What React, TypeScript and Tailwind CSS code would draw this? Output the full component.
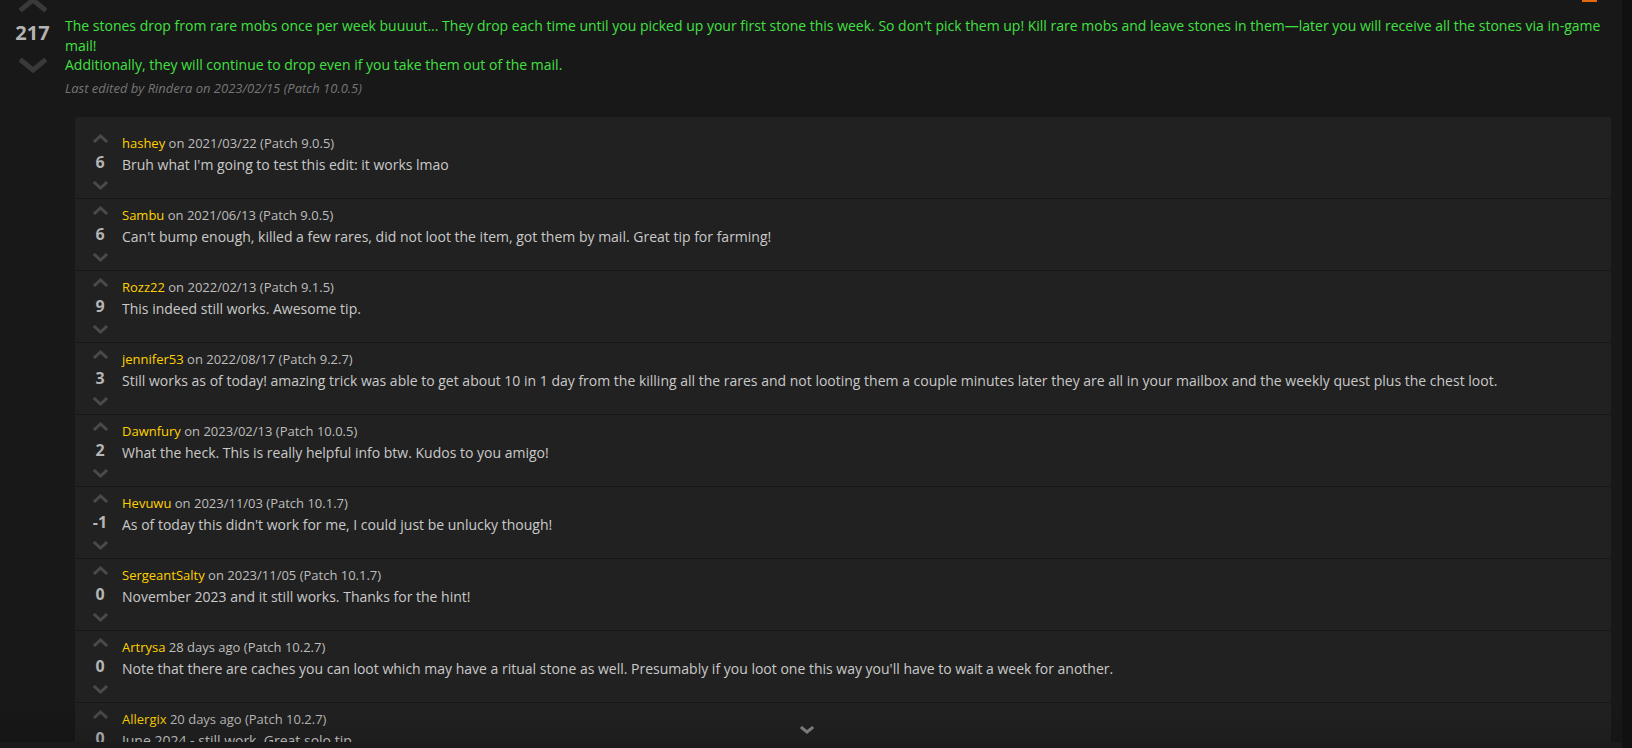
import React from "react";

type C = { user: string; meta: string; score: string; text: string };

const comments: C[] = [
  { user: "hashey", meta: "on 2021/03/22 (Patch 9.0.5)", score: "6", text: "Bruh what I'm going to test this edit: it works lmao" },
  { user: "Sambu", meta: "on 2021/06/13 (Patch 9.0.5)", score: "6", text: "Can't bump enough, killed a few rares, did not loot the item, got them by mail. Great tip for farming!" },
  { user: "Rozz22", meta: "on 2022/02/13 (Patch 9.1.5)", score: "9", text: "This indeed still works. Awesome tip." },
  { user: "jennifer53", meta: "on 2022/08/17 (Patch 9.2.7)", score: "3", text: "Still works as of today! amazing trick was able to get about 10 in 1 day from the killing all the rares and not looting them a couple minutes later they are all in your mailbox and the weekly quest plus the chest loot." },
  { user: "Dawnfury", meta: "on 2023/02/13 (Patch 10.0.5)", score: "2", text: "What the heck. This is really helpful info btw. Kudos to you amigo!" },
  { user: "Hevuwu", meta: "on 2023/11/03 (Patch 10.1.7)", score: "-1", text: "As of today this didn't work for me, I could just be unlucky though!" },
  { user: "SergeantSalty", meta: "on 2023/11/05 (Patch 10.1.7)", score: "0", text: "November 2023 and it still works. Thanks for the hint!" },
  { user: "Artrysa", meta: "28 days ago (Patch 10.2.7)", score: "0", text: "Note that there are caches you can loot which may have a ritual stone as well. Presumably if you loot one this way you'll have to wait a week for another." },
  { user: "Allergix", meta: "20 days ago (Patch 10.2.7)", score: "0", text: "June 2024 - still work. Great solo tip." },
];

function Chevron({ up, w, h, color, sw }: { up?: boolean; w: number; h: number; color: string; sw: number }) {
  const pad = sw / 2 + 0.5;
  const pts = up
    ? `${pad},${h - pad} ${w / 2},${pad} ${w - pad},${h - pad}`
    : `${pad},${pad} ${w / 2},${h - pad} ${w - pad},${pad}`;
  return (
    <svg width={w} height={h} viewBox={`0 0 ${w} ${h}`}>
      <polyline points={pts} fill="none" stroke={color} strokeWidth={sw} strokeLinecap="square" strokeLinejoin="miter" />
    </svg>
  );
}

function CommentRow({ c, first }: { c: C; first: boolean }) {
  return (
    <div className={`flex h-[72px] shrink-0 border-t pl-[5px] ${first ? "border-transparent" : "border-[#171717]"}`}>
      <div className="flex w-[40px] flex-col items-center pt-[4px]">
        <div className="flex h-[16px] items-center justify-center">
          <Chevron up w={15} h={9} color="#4a4a4a" sw={3} />
        </div>
        <div className="flex h-[31px] items-center justify-center text-[16px] font-bold leading-none text-[#b5b5b5]">
          {c.score}
        </div>
        <div className="flex h-[16px] items-center justify-center">
          <Chevron w={15} h={9} color="#4a4a4a" sw={3} />
        </div>
      </div>
      <div className="ml-[2px] min-w-0 flex-1 pt-[6px]">
        <div className="h-[20px] whitespace-nowrap text-[13px] leading-[20px] text-[#bdbdbd]">
          <span className="text-[#ffd100]">{c.user}</span> {c.meta}
        </div>
        <div className="mt-[2px] whitespace-nowrap text-[14px] leading-[20px] text-[#c9c9c9]">{c.text}</div>
      </div>
    </div>
  );
}

export default function App() {
  return (
    <div className="flex h-[748px] w-[1632px] overflow-hidden bg-[#111111]" style={{ fontFamily: '"Open Sans", "Noto Sans", sans-serif' }}>
      <div className="relative h-[748px] w-[1622px] overflow-hidden bg-[#181818]">
        <div className="flex">
          <div className="flex w-[65px] shrink-0 flex-col items-center">
            <div className="-mt-[4px] flex h-[16px] items-center justify-center">
              <Chevron up w={28} h={15} color="#393939" sw={5} />
            </div>
            <div className="flex h-[42px] items-center justify-center text-[20px] font-bold leading-none text-[#b3b3b3]">217</div>
            <div className="mt-[3px] flex h-[16px] items-center justify-center">
              <Chevron w={28} h={15} color="#393939" sw={5} />
            </div>
          </div>
          <div className="min-w-0 flex-1 pr-[11px]">
            <div className="flex h-[16px] items-start justify-end pr-[14px]">
              <div className="h-[2px] w-[15px] bg-[#e3680f]" />
            </div>
            <div className="text-[14px] leading-[19.5px] text-[#42e042]">
              <p>
                The stones drop from rare mobs once per week buuuut... They drop each time until you picked up your first stone this week. So don't pick them up! Kill rare mobs and leave stones in them—later you will receive all the stones via in-game mail!
              </p>
              <p>Additionally, they will continue to drop even if you take them out of the mail.</p>
            </div>
            <div className="mt-[4px] text-[13px] italic leading-[18px] text-[#767676]">
              Last edited by Rindera on 2023/02/15 (Patch 10.0.5)
            </div>
            <div className="ml-[10px] mt-[20px] flex flex-col rounded-t-[3px] bg-[#212121] pt-[9px]">
              {comments.map((c, i) => (
                <CommentRow key={i} c={c} first={i === 0} />
              ))}
            </div>
          </div>
        </div>
        <div className="pointer-events-none absolute bottom-0 left-0 right-0 flex h-[48px] flex-col">
          <div className="flex flex-1 items-end justify-center bg-gradient-to-b from-transparent to-[rgba(0,0,0,0.12)] pb-[8px] pr-[9px]">
            <Chevron w={14} h={8} color="#7a7a7a" sw={3} />
          </div>
          <div className="h-[6px] bg-[#1b1b1b]" />
        </div>
      </div>
    </div>
  );
}
